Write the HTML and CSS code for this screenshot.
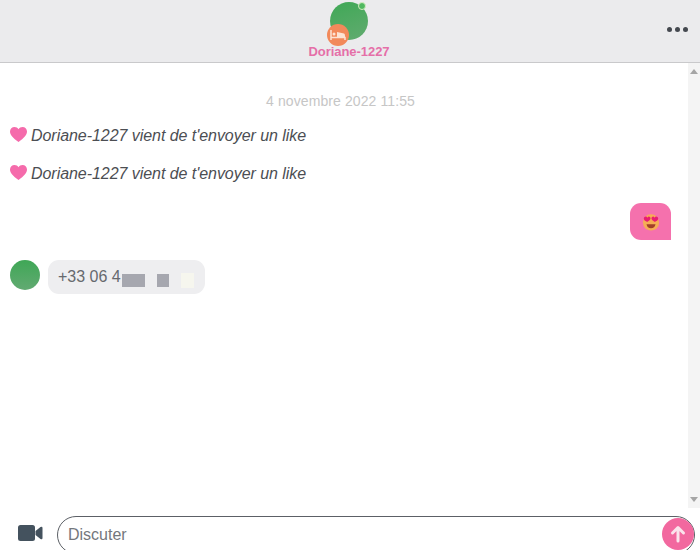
FILE: index.html
```html
<!DOCTYPE html>
<html lang="en">
<head>
    <meta charset="UTF-8">
    <title>Discussion</title>
    <link rel="stylesheet" href="styles.css">
</head>
<body>
    <div class="chat">
        <div class="chat-header">
            <div class="profile">
                <div class="avatar-wrap">
                    <div class="avatar"></div>
                    <div class="online-dot"></div>
                    <div class="status-badge">
                        <svg width="16" height="14" viewBox="0 0 16 14">
                            <path d="M1 2v10M1 9.500h14V12" fill="none" stroke="#fde3d3" stroke-width="1.500"/>
                            <circle cx="4" cy="6" r="1.500" fill="#fde3d3"/>
                            <path d="M7 4l7 1.500q1 .5 1 2V9H7z" fill="#fde3d3"/>
                        </svg>
                    </div>
                </div>
                <div class="profile-name">Doriane-1227</div>
            </div>
            <div class="menu-dots">
                <span></span><span></span><span></span>
            </div>
        </div>

        <div class="chat-body">
            <div class="messages">
                <div class="date">4 novembre 2022 11:55</div>
                <div class="like-line">
                    <svg class="heart" width="17" height="15" viewBox="0 0 17 15"><path d="M8.500 15C3 11 0 8 0 4.500 0 2 2 0 4.500 0 6.200 0 7.700.9 8.500 2.300 9.300.9 10.800 0 12.500 0 15 0 17 2 17 4.500 17 8 14 11 8.500 15z"/></svg>
                    <span>Doriane-1227 vient de t'envoyer un like</span>
                </div>
                <div class="like-line">
                    <svg class="heart" width="17" height="15" viewBox="0 0 17 15"><path d="M8.500 15C3 11 0 8 0 4.500 0 2 2 0 4.500 0 6.200 0 7.700.9 8.500 2.300 9.300.9 10.800 0 12.500 0 15 0 17 2 17 4.500 17 8 14 11 8.500 15z"/></svg>
                    <span>Doriane-1227 vient de t'envoyer un like</span>
                </div>
                <div class="my-message">
                    <div class="emoji-bubble">
                        <svg width="18" height="18" viewBox="0 0 20 20">
                            <circle cx="10" cy="10.500" r="9" fill="#f6ad55"/>
                            <path d="M5 12.500h10q-.8 4.500-5 4.500t-5-4.500z" fill="#a33f2a"/>
                            <path d="M2 6.500C2 4 5 3 6 5.200 7 3 9.500 4 9.500 6.200 9.500 8 7 9.200 5.700 10 4.200 9.200 2 8.200 2 6.500z" fill="#e91e73"/>
                            <path d="M10.500 6.200C10.500 4 13 3 14 5.200 15 3 18 4 18 6.500c0 1.700-2.200 2.700-3.700 3.500-1.300-.8-3.800-2-3.800-3.800z" fill="#e91e73"/>
                        </svg>
                    </div>
                </div>
                <div class="their-message">
                    <div class="small-avatar"></div>
                    <div class="bubble">
                        <span>+33 06 4</span>
                        <div class="blur blur-a"></div>
                        <div class="blur blur-b"></div>
                        <div class="blur blur-c"></div>
                    </div>
                </div>
            </div>
            <div class="scrollbar">
                <div class="arrow-up"></div>
                <div class="arrow-down"></div>
            </div>
        </div>

        <div class="chat-footer">
            <svg class="video-icon" width="25" height="16" viewBox="0 0 25 16">
                <rect x="0" y="0" width="17" height="16" rx="2.500" fill="#44525e"/>
                <path d="M17.500 6l5-4q2-1 2 1v10q0 2-2 1l-5-4z" fill="#44525e"/>
            </svg>
            <div class="input-pill">
                <span class="placeholder">Discuter</span>
                <div class="send-btn">
                    <svg width="18" height="18" viewBox="0 0 18 18"><path d="M9 16V3M3.500 8L9 2.500l5.500 5.500" fill="none" stroke="#fbe3ec" stroke-width="3" stroke-linecap="round" stroke-linejoin="round"/></svg>
                </div>
            </div>
        </div>
    </div>
</body>
</html>
```

FILE: styles.css
```css
/* styles.css */

html, body {
    margin: 0;
    height: 100%;
    overflow: hidden;
}

body {
    background-color: #fff;
    font-family: 'Liberation Sans', Arial, sans-serif;
}

.chat {
    width: 700px;
    height: 550px;
    display: flex;
    flex-direction: column;
}

/* header */

.chat-header {
    height: 62px;
    flex: none;
    background-color: #ebebed;
    border-bottom: 1px solid #c9c9cb;
    display: flex;
    justify-content: center;
    position: relative;
}

.profile {
    display: flex;
    flex-direction: column;
    align-items: center;
    padding-top: 2px;
    padding-right: 2px;
}

.avatar-wrap {
    position: relative;
    width: 38px;
    height: 38px;
}

.avatar {
    width: 38px;
    height: 38px;
    border-radius: 50%;
    background: linear-gradient(160deg, #3fa856, #62ab70);
}

.online-dot {
    position: absolute;
    top: 0;
    right: 2px;
    width: 6px;
    height: 6px;
    border-radius: 50%;
    background-color: #4fb860;
    border: 1.500px solid #d4ecc0;
}

.status-badge {
    position: absolute;
    left: -3px;
    top: 22px;
    width: 22px;
    height: 22px;
    border-radius: 50%;
    background-color: #f2895a;
    display: flex;
    justify-content: center;
    align-items: center;
}

.profile-name {
    margin-top: 4px;
    font-size: 13px;
    line-height: 15px;
    font-weight: bold;
    letter-spacing: -0.05px;
    color: #e56fa8;
}

.menu-dots {
    position: absolute;
    right: 12px;
    top: 27px;
    display: flex;
    gap: 3px;
}

.menu-dots span {
    width: 5px;
    height: 5px;
    border-radius: 50%;
    background-color: #44484f;
}

/* messages */

.chat-body {
    flex: 1;
    display: flex;
    min-height: 0;
}

.messages {
    flex: 1;
    padding: 0 17px 0 10px;
}

.date {
    margin-top: 30px;
    text-align: center;
    font-size: 14px;
    line-height: 17px;
    letter-spacing: 0.1px;
    color: #c6c6c6;
}

.like-line {
    margin-top: 16px;
    height: 22px;
    display: flex;
    align-items: center;
    gap: 4px;
    font-size: 16px;
    font-style: italic;
    letter-spacing: -0.05px;
    color: #4c4e53;
}

.date + .like-line {
    margin-top: 15px;
}

.heart {
    fill: #f56bab;
    margin-top: -3px;
}

.my-message {
    margin-top: 18px;
    display: flex;
    justify-content: flex-end;
}

.emoji-bubble {
    width: 41px;
    height: 37px;
    background-color: #f571ad;
    border-radius: 11px 11px 0 11px;
    display: flex;
    justify-content: center;
    align-items: center;
}

.their-message {
    margin-top: 20px;
    display: flex;
    gap: 8px;
}

.small-avatar {
    width: 30px;
    height: 30px;
    border-radius: 50%;
    background: linear-gradient(180deg, #3fa756, #62aa72);
}

.bubble {
    position: relative;
    width: 157px;
    height: 34px;
    box-sizing: border-box;
    padding-left: 10px;
    background-color: #eeeef0;
    border-radius: 11px;
    font-size: 16px;
    line-height: 33px;
    color: #66696e;
}

/* blurred-out digits of the number */
.blur {
    position: absolute;
}

.blur-a {
    left: 74px;
    top: 14px;
    width: 23px;
    height: 13px;
    background-color: #a6a7af;
}

.blur-b {
    left: 109px;
    top: 14px;
    width: 12px;
    height: 13px;
    background-color: #a6a7af;
}

.blur-c {
    left: 133px;
    top: 13px;
    width: 13px;
    height: 15px;
    background-color: #f6f6ee;
}

/* scrollbar */

.scrollbar {
    width: 12px;
    flex: none;
    background-color: #f4f4f4;
    display: flex;
    flex-direction: column;
    justify-content: space-between;
    align-items: center;
    padding: 6px 0;
}

.arrow-up {
    border-left: 4px solid transparent;
    border-right: 4px solid transparent;
    border-bottom: 5px solid #a5a5a5;
}

.arrow-down {
    border-left: 4px solid transparent;
    border-right: 4px solid transparent;
    border-top: 5px solid #a5a5a5;
}

/* footer */

.chat-footer {
    height: 42px;
    flex: none;
    display: flex;
    align-items: flex-start;
    padding-left: 18px;
    padding-top: 8px;
    box-sizing: border-box;
    gap: 14px;
    overflow: hidden;
}

.video-icon {
    margin-top: 9px;
    flex: none;
}

.input-pill {
    width: 638px;
    height: 38px;
    flex: none;
    box-sizing: border-box;
    border: 1px solid #5c6066;
    border-radius: 19px;
    padding-left: 10px;
    padding-right: 0;
    display: flex;
    justify-content: space-between;
    align-items: center;
}

.placeholder {
    font-size: 16px;
    color: #74777c;
}

.send-btn {
    width: 32px;
    height: 32px;
    margin-top: -2px;
    border-radius: 50%;
    background-color: #f2689f;
    display: flex;
    justify-content: center;
    align-items: center;
}
```
